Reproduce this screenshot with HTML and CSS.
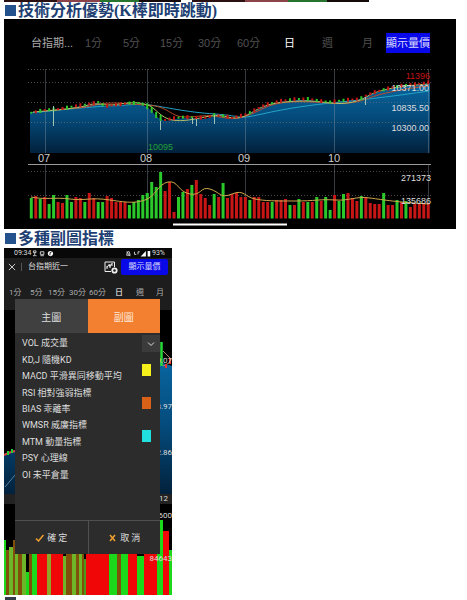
FILE: index.html
```
<!DOCTYPE html>
<html lang="zh-Hant">
<head>
<meta charset="utf-8">
<meta name="viewport" content="width=device-width, initial-scale=1">
<title>技術分析優勢</title>
<link rel="stylesheet" href="styles.css">
</head>
<body>
<main class="page">
  <div class="strips"><span class="strip"></span><span class="strip"></span></div>

  <h2 class="heading">技術分析優勢(K棒即時跳動)</h2>
  <section class="wide">
    <nav class="periods">
      <a class="name" href="#">台指期...</a>
      <a href="#">1分</a><a href="#">5分</a><a href="#">15分</a><a href="#">30分</a><a href="#">60分</a>
      <a class="on" href="#">日</a><a href="#">週</a><a href="#">月</a>
      <button class="show" type="button">顯示量價</button>
    </nav>
    <svg class="chart" viewBox="4 60 452 169" role="img" aria-label="K線圖">
      <defs>
        <linearGradient id="sea" x1="0" y1="0" x2="0" y2="1">
          <stop offset="0" stop-color="#08659f"/><stop offset=".5" stop-color="#044a7a"/><stop offset="1" stop-color="#02213c"/>
        </linearGradient>
      </defs>
      <path id="area" fill="url(#sea)"/>
      <path class="dots" d="M28 69.5H431M28 82.5H431M28 102.5H431M28 122.5H431M28 171.5H431M28 195.5H431"/>
      <path class="rule" d="M45.500 69V153M45.500 165V218M147.500 69V153M147.500 165V218M245.500 69V153M245.500 165V218M334.500 69V153M334.500 165V218M428.500 69V153M428.500 165V218"/>
      <path class="axis" d="M28 164.500H431"/>
      <path class="avg slow" d="M30 113C60 110 85 107 110 106S135 103 150 105S185 112 215 114S235 120 262 114S310 105 340 102S395 96 429 91"/>
      <path class="avg mid" d="M45 111C70 108 80 109 95 105S125 104 147 105S170 117 185 117S205 114 220 117S245 118 262 109S300 101 330 103S365 98 382 94S410 88 429 86"/>
      <path class="avg fast" d="M33 112C55 110 65 110 85 106C98 101 102 107 120 104S145 104 150 106S161 118 172 120S195 119 210 116S232 122 245 116S262 104 285 102S313 101 330 103S360 101 368 96S395 86 429 84"/>
      <g id="candles"></g>
      <path class="wick" d="M53.500 106V126M160.500 121V130M192.500 118V124M196.500 119V126M214.500 115V124M365.500 97V105"/>
      <g id="volume"></g>
      <path class="avg volavg" d="M31 197C45 200 55 197 70 199S90 197 110 200S135 203 145 200S158 184 168 182S178 192 190 194S200 186 210 189S220 199 232 194S245 197 255 199S275 201 295 201S320 199 335 200S355 196 370 198S395 202 429 204"/>
      <g class="labels">
        <text x="38" y="162">07</text><text x="140" y="162">08</text><text x="238" y="162">09</text><text x="328" y="162">10</text>
      </g>
      <g class="prices">
        <text class="high" x="430" y="79">11396</text><text x="429" y="91">10371.00</text><text x="429" y="111">10835.50</text><text x="429" y="131">10300.00</text>
        <text x="431" y="181">271373</text><text x="431" y="204">135686</text><text class="low" x="173" y="150">10095</text>
      </g>
      <path class="home" d="M173 224.500H287"/>
    </svg>
  </section>

  <h2 class="heading">多種副圖指標</h2>
  <section class="phone">
    <div class="status">
      <span>09:34</span>
      <svg viewBox="0 0 26 8" class="notes"><path d="M2 1h3v2H2zM1.500 6.500h4M3.500 3v3M10 2h4v3h-4zM10 6.500h4"/><circle cx="21.500" cy="4" r="3" fill="#fff" stroke="none"/><path d="M21 6V3l2-1" stroke="#111"/></svg>
      <svg viewBox="0 0 30 8" class="signal"><path d="M2 2l4 5M2 6h4L5 2H3zM11 2v3h2M15 2h2M15 2v3"/><path d="M18 7.500L24 1v6.500zM26 1h3v6.500h-3z" fill="#fff" stroke="none"/></svg>
      <span>93%</span>
    </div>
    <header class="bar">
      <button class="close" type="button" aria-label="關閉"><svg viewBox="0 0 9 9"><path d="M1 1l7 7M8 1L1 8"/></svg></button>
      <span class="title">台指期近一</span>
      <button class="gear" type="button" aria-label="設定"><svg viewBox="0 0 14 13"><path d="M7 10.500H1V1h9.500v5M3 5v3M3 6.500l2-3 1 2 2-3M6 3v4M8 2v3"/><circle cx="10.500" cy="9.500" r="2.200" stroke-width="1.800"/></svg></button>
      <button class="show" type="button">顯示量價</button>
    </header>
    <nav class="spans">
      <a href="#">1分</a><a href="#">5分</a><a href="#">15分</a><a href="#">30分</a><a href="#">60分</a><a class="on" href="#">日</a><a href="#">週</a><a href="#">月</a>
    </nav>
    <svg class="back" viewBox="4 310 168 285" role="img" aria-label="走勢與成交量">
      <path fill="#000" d="M4 310h168v285H4z"/>
      <path fill="url(#sea)" d="M4 454L15 450V494H4zM160 362L172 366V494H160z"/>
      <path d="M5 487L15 475" stroke="#5c8199" fill="none"/>
      <path fill="#222" d="M4 494h168v10H4z"/>
      <path d="M4 455l4-2 7-2" stroke="#d44" stroke-width="2" fill="none"/><path d="M8 451v4M12 449v4" stroke="#2c3" stroke-width="2"/>
      <path d="M161.500 342v24" stroke="#28d83a" stroke-width="2.500"/><path d="M163 351l8 8M163 366l8-4" stroke="#a86" fill="none"/><path d="M166 364v4M170 358v6" stroke="#e33" stroke-width="2"/>
      <g id="stripes"></g>
      <g class="ticks">
        <text x="172" y="363">0.07</text><text x="172" y="409">3.97</text><text x="172" y="455">2.86</text><text x="168" y="501">12</text><text x="172" y="518">600</text><text x="172" y="561">84643</text>
      </g>
    </svg>
    <div class="dialog" role="dialog" aria-label="指標">
      <div class="tabs"><button type="button">主圖</button><button class="on" type="button">副圖</button></div>
      <div class="body">
        <ul class="menu">
          <li>VOL 成交量</li><li>KD,J 隨機KD</li><li>MACD 平滑異同移動平均</li><li>RSI 相對強弱指標</li><li>BIAS 乖離率</li><li>WMSR 威廉指標</li><li>MTM 動量指標</li><li>PSY 心理線</li><li>OI 未平倉量</li>
        </ul>
        <div class="side">
          <button class="open" type="button" aria-label="展開"><svg viewBox="0 0 8 6"><path d="M1 1.500l3 3 3-3"/></svg></button>
          <span class="swatch yellow"></span><span class="swatch orange"></span><span class="swatch cyan"></span>
        </div>
      </div>
      <div class="actions">
        <button type="button"><svg viewBox="0 0 9 8"><path d="M1 4.500L3.500 7 8.500 1"/></svg>確 定</button>
        <button type="button"><svg viewBox="0 0 9 8"><path d="M2 1l5 6M7 1L2 7"/></svg>取 消</button>
      </div>
    </div>
  </section>
  <div class="next"></div>
</main>
<script src="chart.js"></script>
</body>
</html>
```
FILE: styles.css
```
* { box-sizing: border-box; }
body { margin: 0; background: #fff; font-family: "Liberation Sans", "Noto Sans CJK TC", sans-serif; }
button { margin: 0; padding: 0; border: 0; background: none; color: inherit; font: inherit; }
a { color: inherit; text-decoration: none; }
svg { display: block; fill: none; }
.page { padding: 0 11px 0 4px; }

.strips { display: flex; gap: 11px; height: 2px; }
.strip { width: 177px; background: linear-gradient(90deg, #2a1010 0 30%, #8b4248 30% 54%, #27742d 54% 76%, #16090a 76%); }

.heading { display: flex; align-items: center; gap: 2px; height: 17px; margin: 0; padding-left: 1px; color: #213f73; font: bold 16px/17px "Liberation Serif", "Noto Sans CJK TC", serif; white-space: nowrap; }
.heading::before { content: ""; width: 11px; height: 11px; background: #24528c; }

.wide { background: #000; }
.periods { display: grid; grid-template-columns: 54fr 38fr 37fr 38fr 39fr 47fr 38fr 40fr 24fr 44fr; align-items: center; height: 41px; padding: 7px 26px 0 27px; color: #505050; font-size: 11px; line-height: 20px; white-space: nowrap; }
.periods .name { color: #aaa; }
.periods .on { color: #fff; }
.show { background: #0808e8; color: #d8d8ff; text-align: center; white-space: nowrap; }
.periods .show { height: 20px; }
.chart { width: 100%; height: auto; }
.dots { stroke: #777; stroke-opacity: .6; stroke-dasharray: 1 2; }
.rule { stroke: #8899a5; stroke-opacity: .4; }
.axis { stroke: #999; }
.avg { stroke-width: 1; }
.slow { stroke: #24a4c8; }
.mid { stroke: #b84c2c; }
.fast { stroke: #b6bf68; }
.volavg { stroke: #d0a84c; }
.wick { stroke: #9fc4b4; }
.up { stroke: #c81616; }
.down { stroke: #2bc82b; }
.labels text { fill: #ccc; font-size: 11px; }
.prices text { fill: #ddd; font-size: 9px; text-anchor: end; }
.prices .high { fill: #c41414; }
.prices .low { fill: #20a03a; }
.home { stroke: #fff; stroke-width: 2; }

.wide + .heading { height: 19px; line-height: 19px; }

.phone { position: relative; width: 168px; background: #1d1d1d; color: #ddd; font-family: Roboto, "Noto Sans CJK TC", sans-serif; font-size: 8px; }
.status { display: flex; align-items: center; height: 10px; padding: 0 7px 0 10px; background: #080808; font-size: 7px; line-height: 10px; }
.status svg { height: 7px; stroke: #ddd; stroke-width: 1; }
.notes { width: 24px; }
.signal { width: 28px; margin-left: auto; }
.bar { display: flex; align-items: center; height: 18px; padding-right: 4px; line-height: 16px; }
.close { padding: 0 5px 0 4px; }
.close svg { width: 8px; height: 8px; stroke: #ddd; }
.title { padding-left: 6px; border-left: 1px solid #555; line-height: 8px; }
.gear { margin-left: auto; margin-right: 3px; }
.gear svg { width: 14px; height: 13px; stroke: #eee; }
.bar .show { width: 47px; border-radius: 2px; line-height: 16px; }
.spans { display: grid; grid-template-columns: 21fr 18fr 21fr 20fr 26fr 21fr 20fr 16fr; height: 34px; padding-left: 5px; color: #aaa; line-height: 34px; white-space: nowrap; }
.spans .on { color: #fff; }
.back { width: 100%; height: auto; }
.ticks text { fill: #ddd; font-size: 8px; text-anchor: end; }

.dialog { position: absolute; top: 51px; left: 11px; width: 145px; background: #2c2c2c; }
.tabs { display: grid; grid-template-columns: 1fr 1fr; height: 34px; background: #404040; font-size: 10px; }
.tabs .on { background: #f28030; color: #ffe8d8; }
.body { display: flex; justify-content: space-between; height: 187px; padding-top: 2px; }
.menu { display: grid; grid-auto-rows: 1fr; align-items: center; height: 148px; margin: 0; padding: 0 0 0 7px; list-style: none; font-size: 9px; line-height: 16px; white-space: nowrap; }
.side { display: flex; flex-direction: column; width: 18px; }
.open { display: grid; place-items: center; height: 17px; background: #3b3b3b; }
.open svg { width: 8px; height: 6px; stroke: #ddd; }
.swatch { width: 9px; height: 12px; margin-bottom: 21px; }
.open + .swatch { margin-top: 12px; }
.yellow { background: #f5f01c; }
.orange { background: #da6218; }
.cyan { background: #20e0e0; }
.actions { display: grid; grid-template-columns: 1fr 1fr; height: 34px; border-top: 1px solid #505050; font-size: 9px; }
.actions button { display: flex; align-items: center; justify-content: center; gap: 3px; }
.actions button + button { border-left: 1px solid #505050; }
.actions svg { width: 9px; height: 8px; stroke: #f0a030; stroke-width: 1.5; }

.next { width: 11px; height: 3px; margin: 2px 0 0 1px; background: #333c48; }
```
FILE: chart.js
```
const NS = "http://www.w3.org/2000/svg";

function stroke(parent, d, cls, width) {
  const p = document.createElementNS(NS, "path");
  p.setAttribute("d", d);
  p.setAttribute("class", cls);
  p.setAttribute("stroke-width", width);
  parent.appendChild(p);
}

// Price line, as x,y pairs
const price = [[30,114],[45,111],[60,110],[75,107],[90,105],[98,103],[105,107],[115,106],[130,104],[140,104],[147,107],[152,111],[157,117],[165,121],[175,119],[185,118],[205,119],[215,116],[225,117],[232,119],[240,117],[247,115],[255,111],[265,106],[280,102],[297,100],[310,100],[320,102],[330,103],[345,101],[360,100],[365,97],[375,93],[390,89],[405,86],[420,85],[430,83]];
document.getElementById("area").setAttribute("d", "M30 153L" + price.map(p => p.join(" ")).join("L") + "V153Z");

function priceAt(x) {
  const i = Math.max(1, price.findIndex(p => p[0] >= x));
  const [a, b] = [price[i - 1], price[i]];
  return a[1] + (b[1] - a[1]) * (x - a[0]) / (b[0] - a[0]);
}

// Volume bars: g = falling, r = rising, then the y of the top
const volume = "g198 r196 g199 r197 g204 g195 r202 r203 g195 g202 r197 r198 g202 r193 r198 g202 g202 r196 r198 r202 r202 r202 g205 g202 g200 g195 g193 g182 g187 g172 r191 r182 r212 g197 g192 r189 g185 r180 r194 r198 r205 g194 r197 g183 r198 r194 r193 r197 r197 g200 r197 r197 r202 r202 g202 r200 r200 r199 g205 r205 g199 r202 g202 r202 g197 r201 g197 g210 r195 g201 g194 r193 r198 r201 g196 r197 r203 r204 r204 g193 r205 r205 g200 r202 g201 r207 r204 r204 r203 r203".split(" ");
const candles = document.getElementById("candles");
const bars = document.getElementById("volume");
volume.forEach((v, i) => {
  const x = 31.3 + i * 4.46;
  const cls = v[0] === "g" ? "down" : "up";
  stroke(bars, `M${x} ${v.slice(1)}V218.500`, cls, 3);
  const y = priceAt(x) - 1;
  const h = i > 25 && i < 30 ? 3 : 1 + (i * 7 % 3) / 2;
  stroke(candles, `M${x} ${y - h}V${y + h}`, cls, 2);
});

// Volume stripes behind the dialog: left edge, colour, top
const stripes = [[4,"#1bd81b",540],[6,"#80500a",550],[9,"#6fb52a",547],[13,"#80500a",540],[15,"#6fb52a",550],[18,"#80500a",550],[22,"#6fb52a",550],[26,"#1bd81b",572],[29,"#80500a",550],[32,"#1bd81b",550],[37,"#f00606",550],[47,"#8fa52a",550],[51,"#f00606",550],[63,"#6fb52a",556],[66,"#80500a",550],[72,"#6fb52a",550],[76,"#80500a",550],[79,"#6fb52a",550],[82,"#80500a",550],[84,"#4a9a1a",559],[86,"#f00606",550],[109,"#1bd81b",550],[117,"#80500a",550],[121,"#1bd81b",550],[128,"#f00606",550],[137,"#1bd81b",556],[144,"#f00606",550],[157,"#1bd81b",520],[163,"#f00606",531],[169,"#1bd81b",550],[172]];
const group = document.getElementById("stripes");
for (let i = 0; i < stripes.length - 1; i++) {
  const [x, colour, top] = stripes[i];
  const r = document.createElementNS(NS, "rect");
  r.setAttribute("x", x);
  r.setAttribute("y", top);
  r.setAttribute("width", stripes[i + 1][0] - x);
  r.setAttribute("height", 595 - top);
  r.setAttribute("fill", colour);
  group.appendChild(r);
}
```
